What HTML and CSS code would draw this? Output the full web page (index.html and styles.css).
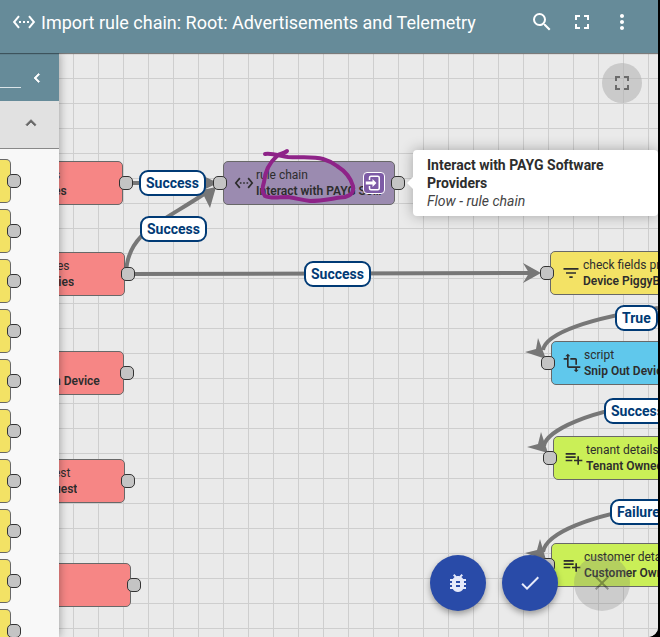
FILE: index.html
```html
<!DOCTYPE html>
<html lang="en">
<head>
<meta charset="utf-8">
<title>Import rule chain</title>
<link rel="stylesheet" href="styles.css">
</head>
<body>
<svg class="defs" aria-hidden="true">
  <symbol id="chain" viewBox="0 0 24 24"><path d="M7.77 6.76L6.23 5.48.82 12l5.41 6.52 1.54-1.28L3.42 12l4.35-5.24zM7 13h2v-2H7v2zm10-2h-2v2h2v-2zm-6 2h2v-2h-2v2zm6.77-7.52l-1.54 1.28L20.58 12l-4.35 5.24 1.54 1.28L23.18 12l-5.41-6.52z"/></symbol>
  <symbol id="search" viewBox="0 0 24 24"><path d="M15.5 14h-.79l-.28-.27A6.47 6.47 0 0 0 16 9.5 6.5 6.5 0 1 0 9.5 16c1.61 0 3.09-.59 4.23-1.57l.27.28v.79l5 4.99L20.49 19l-4.99-5zm-6 0C7.01 14 5 11.99 5 9.5S7.01 5 9.5 5 14 7.01 14 9.5 11.99 14 9.5 14z"/></symbol>
  <symbol id="full" viewBox="0 0 24 24"><path d="M7 14H5v5h5v-2H7v-3zm-2-4h2V7h3V5H5v5zm12 7h-3v2h5v-5h-2v3zM14 5v2h3v3h2V5h-5z"/></symbol>
  <symbol id="more" viewBox="0 0 24 24"><path d="M12 8c1.1 0 2-.9 2-2s-.9-2-2-2-2 .9-2 2 .9 2 2 2zm0 2c-1.1 0-2 .9-2 2s.9 2 2 2 2-.9 2-2-.9-2-2-2zm0 6c-1.1 0-2 .9-2 2s.9 2 2 2 2-.9 2-2-.9-2-2-2z"/></symbol>
  <symbol id="left" viewBox="0 0 24 24"><path d="M15.41 7.41L14 6l-6 6 6 6 1.41-1.41L10.83 12z"/></symbol>
  <symbol id="up" viewBox="0 0 24 24"><path d="M12 8l-6 6 1.41 1.41L12 10.83l4.59 4.58L18 14z"/></symbol>
  <symbol id="filter" viewBox="0 0 24 24"><path d="M10 18h4v-2h-4v2zM3 6v2h18V6H3zm3 7h12v-2H6v2z"/></symbol>
  <symbol id="transform" viewBox="0 0 24 24"><path d="M22 18v-2H8V4h2L7 1 4 4h2v2H2v2h4v8c0 1.1.9 2 2 2h8v2h-2l3 3 3-3h-2v-2h4zM10 8h6v6h2V8c0-1.1-.9-2-2-2h-6v2z"/></symbol>
  <symbol id="enrich" viewBox="0 0 24 24"><path d="M14 10H2v2h12v-2zm0-4H2v2h12V6zm4 8v-4h-2v4h-4v2h4v4h2v-4h4v-2h-4zM2 16h8v-2H2v2z"/></symbol>
  <symbol id="open" viewBox="0 0 24 24"><path d="M10 17.25V14H1v-4h9V6.75L15.25 12 10 17.25zM8 2h9a3 3 0 0 1 3 3v14a3 3 0 0 1-3 3H8a3 3 0 0 1-3-3v-3h2v3c0 .55.45 1 1 1h9c.55 0 1-.45 1-1V5c0-.55-.45-1-1-1H8c-.55 0-1 .45-1 1v3H5V5a3 3 0 0 1 3-3z"/></symbol>
  <symbol id="bug" viewBox="0 0 24 24"><path d="M20 8h-2.81c-.45-.78-1.07-1.45-1.82-1.96L17 4.41 15.59 3l-2.17 2.17C12.96 5.06 12.49 5 12 5s-.96.06-1.41.17L8.41 3 7 4.41l1.62 1.63C7.88 6.55 7.26 7.22 6.81 8H4v2h2.09c-.05.33-.09.66-.09 1v1H4v2h2v1c0 .34.04.67.09 1H4v2h2.81c1.04 1.79 2.97 3 5.19 3s4.15-1.21 5.19-3H20v-2h-2.09c.05-.33.09-.66.09-1v-1h2v-2h-2v-1c0-.34-.04-.67-.09-1H20V8zm-6 8h-4v-2h4v2zm0-4h-4v-2h4v2z"/></symbol>
  <symbol id="done" viewBox="0 0 24 24"><path d="M9 16.2L4.8 12l-1.4 1.4L9 19 21 7l-1.4-1.4L9 16.2z"/></symbol>
  <symbol id="close" viewBox="0 0 24 24"><path d="M19 6.41L17.59 5 12 10.59 6.41 5 5 6.41 10.59 12 5 17.59 6.41 19 12 13.41 17.59 19 19 17.59 13.41 12z"/></symbol>
</svg>
<div class="app">
  <header class="toolbar">
    <svg class="icon"><use href="#chain"/></svg>
    <h1 class="title">Import rule chain: Root: Advertisements and Telemetry</h1>
    <button class="tool" aria-label="Search"><svg class="icon"><use href="#search"/></svg></button>
    <button class="tool" aria-label="Fullscreen"><svg class="icon"><use href="#full"/></svg></button>
    <button class="tool" aria-label="More"><svg class="icon"><use href="#more"/></svg></button>
  </header>
  <div class="body">
    <aside class="library">
      <div class="library-search">
        <input class="search-box" type="text" aria-label="Search nodes">
        <button class="plain" aria-label="Collapse library"><svg class="icon small"><use href="#left"/></svg></button>
      </div>
      <button class="library-group" aria-label="Collapse group"><svg class="icon"><use href="#up"/></svg></button>
      <div class="library-list">
        <div class="item"><i class="port"></i></div>
        <div class="item"><i class="port"></i></div>
        <div class="item"><i class="port"></i></div>
        <div class="item"><i class="port"></i></div>
        <div class="item"><i class="port"></i></div>
        <div class="item"><i class="port"></i></div>
        <div class="item"><i class="port"></i></div>
        <div class="item"><i class="port"></i></div>
        <div class="item"><i class="port"></i></div>
        <div class="item"><i class="port"></i></div>
      </div>
    </aside>
    <main class="canvas">
      <svg class="edges" aria-hidden="true">
        <g transform="translate(-59 -53)">
          <path class="edge" d="M126 183H206M126 274C127 232 160 224 207 192M128 274L530 273M658 308C590 318 546 333 543 350M658 403C590 409 546 431 544 446M658 505C590 515 546 533 543 552"/>
          <path class="head" d="M218 183L197 173L202 183L197 193ZM216 187L193 192L204 196L210 208ZM541 273L523 263L529 273L523 283ZM546 359L538 338L536 349L525 352ZM548 453L541 432L538 444L527 447ZM546 560L540 539L537 550L525 553Z"/>
        </g>
      </svg>
      <section class="node input n1"><div class="text"><span>s</span><b>es</b></div><i class="port out"></i></section>
      <section class="node input n2"><div class="text"><span>ies</span><b>ries</b></div><i class="port out"></i></section>
      <section class="node input n3"><div class="text"><span>&nbsp;</span><b>n Device</b></div><i class="port out"></i></section>
      <section class="node input n4"><div class="text"><span>est</span><b>uest</b></div><i class="port out"></i></section>
      <section class="node input n5"><i class="port out"></i></section>
      <section class="node flow n6">
        <i class="port in"></i>
        <svg class="icon type"><use href="#chain"/></svg>
        <div class="text"><span>rule chain</span><b>Interact with PAYG Software</b></div>
        <button class="open" aria-label="Open rule chain"><svg class="icon small"><use href="#open"/></svg></button>
        <i class="port out"></i>
      </section>
      <section class="node filter n7"><i class="port in"></i><svg class="icon type"><use href="#filter"/></svg><div class="text"><span>check fields presence</span><b>Device PiggyBack</b></div></section>
      <section class="node script n8"><i class="port in"></i><svg class="icon type"><use href="#transform"/></svg><div class="text"><span>script</span><b>Snip Out Device</b></div></section>
      <section class="node enrich n9"><i class="port in"></i><svg class="icon type"><use href="#enrich"/></svg><div class="text"><span>tenant details</span><b>Tenant Owned</b></div></section>
      <section class="node enrich n10"><i class="port in"></i><svg class="icon type"><use href="#enrich"/></svg><div class="text"><span>customer details</span><b>Customer Owned</b></div></section>
      <span class="label l1">Success</span>
      <span class="label l2">Success</span>
      <span class="label l3">Success</span>
      <span class="label l4">True</span>
      <span class="label l5">Success</span>
      <span class="label l6">Failure</span>
      <div class="tooltip" role="tooltip"><b>Interact with PAYG Software Providers</b><em>Flow - rule chain</em></div>
      <svg class="edges" aria-hidden="true">
        <g transform="translate(-59 -53)">
          <path class="scribble" d="M265 154C273 153 280 156 288 157C300 158 313 156 323 159C330 161 333 163 337 166C345 171 351 179 353 186C354 192 352 195 345 197C334 198 323 201 310 201C301 200 296 198 288 197C279 197 271 199 265 196C262 193 262 188 264 182C265 172 269 163 277 156C280 153 284 154 287 151"/>
        </g>
      </svg>
      <button class="expand" aria-label="Expand canvas"><svg class="icon"><use href="#full"/></svg></button>
      <div class="actions">
        <button class="fab" aria-label="Debug"><svg class="icon"><use href="#bug"/></svg></button>
        <button class="fab" aria-label="Apply"><svg class="icon"><use href="#done"/></svg></button>
        <button class="fab muted" aria-label="Cancel"><svg class="icon"><use href="#close"/></svg></button>
      </div>
    </main>
  </div>
</div>
</body>
</html>
```

FILE: styles.css
```css
* { box-sizing: border-box; }
body { margin: 0; background: #000; font-family: Roboto, sans-serif; color: #2d2d2d; }
button { border: 0; padding: 0; margin: 0; background: none; color: inherit; font: inherit; display: flex; align-items: center; justify-content: center; }
.defs { position: absolute; width: 0; height: 0; }
.icon { width: 24px; height: 24px; fill: currentColor; flex: none; display: block; }
.small { width: 18px; height: 18px; }
.app { display: flex; flex-direction: column; height: 100vh; margin-right: 2px; overflow: hidden; background: #eaeaea; border-radius: 0 0 10px 0; }
.toolbar { display: flex; align-items: center; height: 53px; flex: none; padding: 0 16px 10px 12px; background: #668b99; color: #fff; position: relative; z-index: 3; box-shadow: 0 1px 1px rgba(0, 0, 0, .4); }
.title { flex: 1; margin: 0 0 0 5px; font-size: 18px; font-weight: 400; line-height: 24px; padding-top: 2px; white-space: nowrap; }
.tool { width: 40px; height: 40px; }
.body { display: flex; flex: 1; min-height: 0; }
.library { width: 59px; flex: none; display: flex; flex-direction: column; background: #f8f8f8; position: relative; z-index: 2; box-shadow: 1px 0 8px rgba(0, 0, 0, .3); overflow: hidden; clip-path: inset(0 -10px 0 0); }
.library-search { display: flex; align-items: center; height: 48px; flex: none; padding-top: 2px; background: #668b99; color: #fff; }
.search-box { width: 21px; height: 20px; border: 0; border-bottom: 1px solid #dbe4e8; background: none; padding: 0; border-radius: 0; color: #fff; outline: 0; }
.plain { flex: 1; padding-right: 6px; }
.plain .icon { stroke: currentColor; stroke-width: 1; }
.library-group { height: 48px; flex: none; background: #e1e1e1; border-bottom: 1px solid #888; color: #666; padding: 0 0 4px 2px; }
.library-group .icon { width: 20px; height: 20px; stroke: currentColor; stroke-width: 1; }
.library-list { display: flex; flex-direction: column; gap: 6px; padding-top: 10px; overflow: hidden; flex: 1; }
.item { position: relative; width: 11px; height: 44px; flex: none; background: #f3e265; border: 1px solid #686868; border-left: 0; border-radius: 0 5px 5px 0; }
.port { position: absolute; width: 14px; height: 14px; top: 14px; right: -11px; background: #c4c4c4; border: 1px solid #333; border-radius: 5px; }
.canvas { position: relative; flex: 1; min-width: 0; overflow: hidden; background: linear-gradient(90deg, #cecece 1px, transparent 1px) 14px 0 / 25px 25px, linear-gradient(#cecece 1px, transparent 1px) 0 0 / 25px 25px, #eaeaea; }
.edges { position: absolute; inset: 0; width: 100%; height: 100%; pointer-events: none; }
.edge { fill: none; stroke: #777; stroke-width: 4; }
.head { fill: #777; }
.scribble { fill: none; stroke: #8e2388; stroke-width: 4; stroke-linecap: round; stroke-linejoin: round; }
.node { position: absolute; display: flex; align-items: center; width: 172px; height: 44px; padding-left: 10px; border: 1px solid #686868; border-radius: 5px; }
.node .out { right: -11px; }
.node .in { right: auto; left: -11px; }
.type { width: 20px; height: 20px; }
.text { display: flex; flex-direction: column; min-width: 0; margin: 0 9px 0 2px; font-size: 12px; line-height: 16px; }
.text span, .text b { white-space: nowrap; overflow: hidden; text-overflow: ellipsis; }
.text b { font-weight: 600; }
.input { background: #f68685; left: -16px; }
.input .text { margin-left: 0; }
.flow { background: #9b8bb0; }
.filter { background: #f3e265; }
.script { background: #60c8ec; }
.enrich { background: #caef57; }
.n1 { top: 108px; width: 80px; }
.n2 { top: 199px; width: 82px; }
.n3 { top: 298px; width: 81px; }
.n4 { top: 406px; width: 82px; }
.n5 { top: 510px; width: 88px; }
.n6 { top: 108px; left: 164px; }
.n7 { top: 198px; left: 491px; }
.n8 { top: 288px; left: 492px; }
.n9 { top: 383px; left: 494px; }
.n10 { top: 490px; left: 492px; }
.open { position: absolute; right: 9px; top: 10px; width: 22px; height: 22px; border: 1px solid #fff; border-radius: 4px; background: #7d5ba6; color: #fff; }
.label { position: absolute; height: 26px; padding: 0 5px; border: 2px solid #003a75; border-radius: 9px; background: #fff; color: #003a75; font-size: 14px; font-weight: 700; line-height: 22px; white-space: nowrap; }
.l1 { left: 80px; top: 117px; }
.l2 { left: 81px; top: 163px; }
.l3 { left: 245px; top: 208px; }
.l4 { left: 556px; top: 252px; }
.l5 { left: 545px; top: 345px; }
.l6 { left: 551px; top: 446px; }
.tooltip { position: absolute; left: 354px; top: 97px; width: 245px; padding: 6px 14px; border-radius: 4px; background: #fff; font-size: 14px; line-height: 18px; box-shadow: 0 0 14px rgba(0, 0, 0, .3); }
.tooltip::before { content: ""; position: absolute; left: -6px; top: 27px; border: 6px solid transparent; border-left: 0; border-right-color: #fff; }
.tooltip b { display: block; }
.tooltip em { display: block; color: #444; }
.expand { position: absolute; top: 10px; right: 16px; width: 40px; height: 40px; border-radius: 50%; background: rgba(180, 180, 180, .6); color: #6b6b6b; }
.actions { position: absolute; right: 28px; bottom: 26px; display: flex; gap: 16px; }
.fab { width: 56px; height: 56px; border-radius: 50%; background: #294ba8; color: #e6eafa; box-shadow: 0 3px 6px rgba(0, 0, 0, .35); }
.muted { background: rgba(120, 120, 120, .26); color: rgba(0, 0, 0, .32); box-shadow: none; }
```
